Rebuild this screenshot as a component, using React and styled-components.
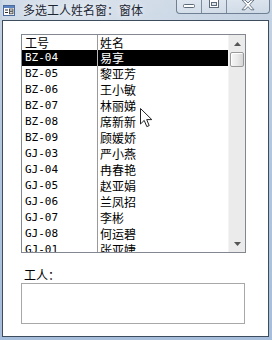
import React from "react";
import styled, { createGlobalStyle } from "styled-components";

const GlobalStyle = createGlobalStyle`
  html, body {
    margin: 0;
    padding: 0;
    background: #a9bfda;
  }
  body {
    font-family: "Noto Sans CJK SC", "Liberation Sans", sans-serif;
  }
`;

const Frame = styled.div`
  position: relative;
  width: 272px;
  height: 340px;
  box-sizing: border-box;
  display: flex;
  flex-direction: column;
  padding: 0 3px 3px 2px;
  background: linear-gradient(
    180deg,
    #c7d4e3 0%,
    #c3d1e2 8%,
    #b3c7de 40%,
    #a6bedb 100%
  );
  overflow: hidden;
`;

const TitleBar = styled.div`
  height: 20px;
  flex-shrink: 0;
  display: flex;
  align-items: center;
  padding-left: 1px;
  background: linear-gradient(
    90deg,
    rgba(255, 255, 255, 0.15) 0%,
    rgba(255, 255, 255, 0.35) 25%,
    rgba(255, 255, 255, 0.2) 55%,
    rgba(255, 255, 255, 0) 100%
  );
`;

const TitleText = styled.span`
  margin-left: 8px;
  font-size: 12px;
  line-height: 20px;
  color: #1c2633;
  white-space: nowrap;
  text-shadow: 0 0 6px rgba(255, 255, 255, 0.9);
`;

const CaptionGroup = styled.div`
  margin-left: auto;
  margin-right: -1px;
  align-self: flex-start;
  display: flex;
  height: 13px;
  border: 1px solid #6f8094;
  border-top: none;
  border-radius: 0 0 4px 4px;
  overflow: hidden;
  background: linear-gradient(180deg, rgba(255, 255, 255, 0.35), rgba(255, 255, 255, 0.15));
`;

const CaptionButton = styled.div`
  width: ${(p) => p.$w}px;
  height: 100%;
  display: flex;
  justify-content: center;
  align-items: flex-start;
  border-right: ${(p) => (p.$last ? "none" : "1px solid #7d8da0")};
  box-sizing: border-box;
`;

const Client = styled.div`
  flex: 1;
  background: #fff;
  border: 1px solid #3e4d5d;
  display: flex;
  flex-direction: column;
  padding: 13px 0 0 18px;
`;

const ListBox = styled.div`
  width: 225px;
  height: 219px;
  box-sizing: border-box;
  border: 1px solid #828790;
  display: flex;
`;

const Rows = styled.div`
  flex: 1;
  overflow: hidden;
`;

const Row = styled.div`
  display: grid;
  grid-template-columns: 76px 1fr;
  height: ${(p) => (p.$head ? 15 : 16)}px;
  line-height: ${(p) => (p.$head ? 15 : 16)}px;
  background: ${(p) => (p.$selected ? "#000" : "transparent")};
  color: ${(p) => (p.$selected ? "#fff" : "#000")};
`;

const CodeCell = styled.div`
  box-sizing: border-box;
  border-right: 1px solid ${(p) => (p.$selected ? "#b8b8b8" : "#9a9a9a")};
  padding-left: 3px;
  font-family: ${(p) =>
    p.$head
      ? `"Noto Sans CJK SC", sans-serif`
      : `"DejaVu Sans Mono", "Liberation Mono", monospace`};
  font-size: ${(p) => (p.$head ? 12 : 11)}px;
`;

const NameCell = styled.div`
  padding-left: 2px;
  font-size: 12px;
  white-space: nowrap;
`;

const ScrollBar = styled.div`
  width: 17px;
  background: #ebebeb;
  border-left: 1px solid #f4f4f4;
  box-sizing: border-box;
  display: flex;
  flex-direction: column;
  align-items: center;
`;

const ArrowButton = styled.div`
  height: 17px;
  width: 100%;
  display: flex;
  justify-content: center;
  align-items: center;
  margin-top: ${(p) => (p.$down ? "auto" : "0")};
`;

const Thumb = styled.div`
  width: 14px;
  height: 15px;
  box-sizing: border-box;
  border: 1px solid #999;
  border-radius: 2px;
  background: linear-gradient(90deg, #f6f6f6 0%, #eaeaea 50%, #d6d6d6 100%);
  box-shadow: inset 1px 1px 0 #fff;
`;

const FieldLabel = styled.div`
  margin-top: 15px;
  padding-left: 3px;
  font-size: 12px;
  line-height: 14px;
  color: #000;
`;

const TextBox = styled.div`
  margin-top: 1px;
  width: 224px;
  height: 41px;
  box-sizing: border-box;
  border: 1px solid #a8a8a8;
`;

const Pointer = styled.svg`
  position: absolute;
  left: 140px;
  top: 108px;
`;

const workers = [
  ["BZ-04", "易享"],
  ["BZ-05", "黎亚芳"],
  ["BZ-06", "王小敏"],
  ["BZ-07", "林丽娣"],
  ["BZ-08", "席新新"],
  ["BZ-09", "顾媛娇"],
  ["GJ-03", "严小燕"],
  ["GJ-04", "冉春艳"],
  ["GJ-05", "赵亚娟"],
  ["GJ-06", "兰凤招"],
  ["GJ-07", "李彬"],
  ["GJ-08", "何运碧"],
  ["GJ-01", "张亚婕"],
];

const FormIcon = () => (
  <svg width="12" height="11" viewBox="0 0 12 11">
    <rect x="0.5" y="0.5" width="11" height="10" fill="#fff" stroke="#4a6a9c" />
    <rect x="1" y="1" width="10" height="2" fill="#5b83c2" />
    <rect x="2" y="4.5" width="3" height="1" fill="#333" />
    <rect x="2" y="7" width="3" height="1" fill="#333" />
    <rect x="6.5" y="4" width="3.5" height="2" fill="none" stroke="#333" strokeWidth="0.8" />
    <rect x="6.5" y="6.8" width="3.5" height="2" fill="none" stroke="#333" strokeWidth="0.8" />
  </svg>
);

export default function App() {
  return (
    <>
      <GlobalStyle />
      <Frame>
        <TitleBar>
          <FormIcon />
          <TitleText>多选工人姓名窗：窗体</TitleText>
          <CaptionGroup>
            <CaptionButton $w={25}>
              <svg width="14" height="10" viewBox="0 0 14 10">
                <rect x="1.5" y="4.5" width="11" height="3" rx="1" fill="#fff" stroke="#5d6a7a" />
              </svg>
            </CaptionButton>
            <CaptionButton $w={25}>
              <svg width="12" height="10" viewBox="0 0 12 10">
                <rect x="1.5" y="-0.5" width="9" height="8" fill="#fff" stroke="#5d6a7a" />
                <rect x="3.5" y="2.5" width="5" height="3" fill="#dfe5ec" stroke="#5d6a7a" />
              </svg>
            </CaptionButton>
            <CaptionButton $w={42} $last>
              <svg width="14" height="11" viewBox="0 0 14 11">
                <path
                  d="M1 0 L4 0 L7 3 L10 0 L13 0 L8.6 4.8 L13 9.8 L10 9.8 L7 6.6 L4 9.8 L1 9.8 L5.4 4.8 Z"
                  fill="#fff"
                  stroke="#5d6a7a"
                  strokeWidth="0.9"
                />
              </svg>
            </CaptionButton>
          </CaptionGroup>
        </TitleBar>
        <Client>
          <ListBox>
            <Rows>
              <Row $head>
                <CodeCell $head>工号</CodeCell>
                <NameCell>姓名</NameCell>
              </Row>
              {workers.map(([code, name], i) => (
                <Row key={code} $selected={i === 0}>
                  <CodeCell $selected={i === 0}>{code}</CodeCell>
                  <NameCell>{name}</NameCell>
                </Row>
              ))}
            </Rows>
            <ScrollBar>
              <ArrowButton>
                <svg width="7" height="4" viewBox="0 0 7 4">
                  <path d="M3.5 0 L7 4 L0 4 Z" fill="#555" />
                </svg>
              </ArrowButton>
              <Thumb />
              <ArrowButton $down>
                <svg width="7" height="4" viewBox="0 0 7 4">
                  <path d="M0 0 L7 0 L3.5 4 Z" fill="#555" />
                </svg>
              </ArrowButton>
            </ScrollBar>
          </ListBox>
          <FieldLabel>工人：</FieldLabel>
          <TextBox />
        </Client>
        <Pointer width="13" height="20" viewBox="0 0 13 20">
          <path
            d="M0.5 0.5 L0.5 16 L4.2 12.4 L6.8 18.6 L9.2 17.6 L6.7 11.6 L11.8 11.6 Z"
            fill="#fff"
            stroke="#222"
            strokeWidth="1"
            strokeLinejoin="round"
          />
        </Pointer>
      </Frame>
    </>
  );
}
